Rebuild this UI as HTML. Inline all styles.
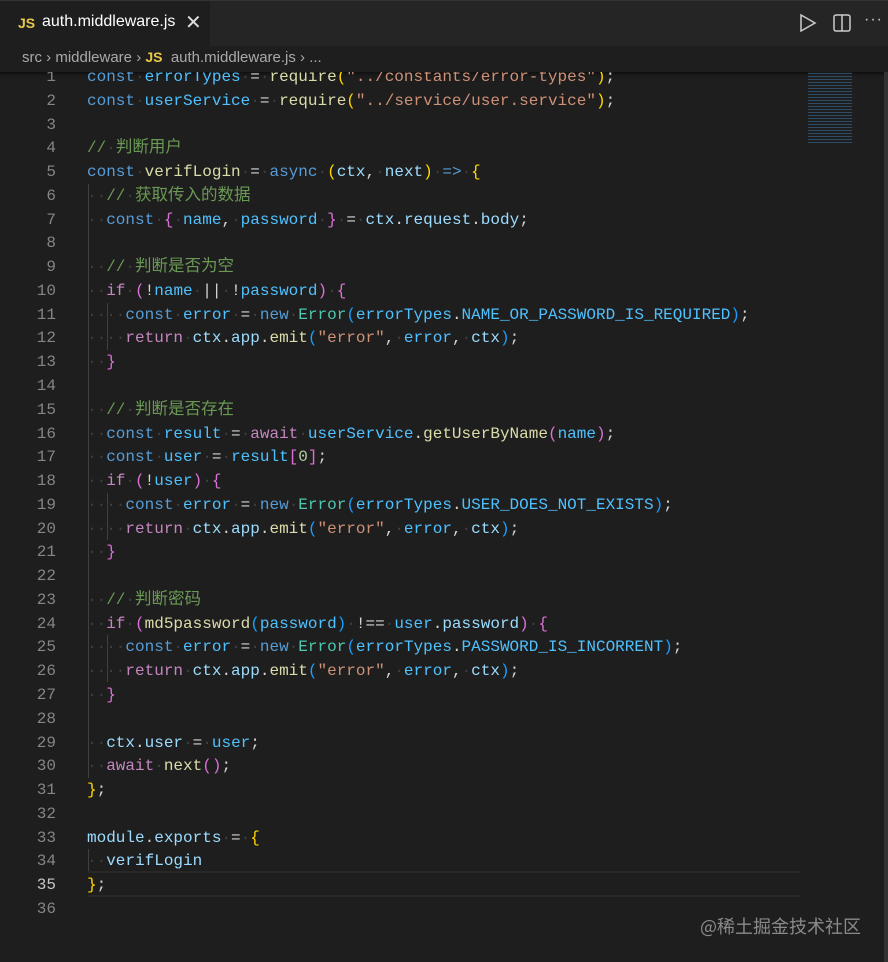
<!DOCTYPE html>
<html><head><meta charset="utf-8"><style>
body{margin:0;width:888px;height:962px;background:#1e1e1e;overflow:hidden;position:relative;font-family:"Liberation Sans",sans-serif}
.tabbar{position:absolute;left:0;top:0;width:888px;height:45px;background:#252526;border-top:1px solid #333}
.tab{position:absolute;left:0;top:0;width:210px;height:45px;background:#1e1e1e}
.js{color:#e8c84a;font-weight:bold;font-size:14px}
.crumb{position:absolute;left:22px;top:49px;font-size:15px;color:#a9a9a9}
.code{position:absolute;left:0;top:72px;width:888px;height:890px;overflow:hidden;box-shadow:inset 0 6px 6px -6px #000}
.ln{position:absolute;left:0;width:56px;text-align:right;color:#858585;font:16px/24px "Liberation Mono",monospace;height:24px}
.l{position:absolute;left:87px;white-space:pre;font:16px/24px "Liberation Mono",monospace;height:24px;color:#d4d4d4;letter-spacing:0}
.cj{font-family:"Noto Sans CJK SC",sans-serif;font-size:16.5px;line-height:1}
.k{color:#569cd6}.v{color:#9cdcfe}.c{color:#4fc1ff}.f{color:#dcdcaa}.s{color:#ce9178}.m{color:#6a9955}.p{color:#c586c0}.t{color:#4ec9b0}.y{color:#ffd700}.o{color:#da70d6}.b{color:#179fff}.n{color:#b5cea8}.d{color:#3f3f3f}
.g{position:absolute;width:1px;background:#404040}
</style></head><body>
<div class="tabbar">
<div class="tab"><span class="js" style="position:absolute;left:18px;top:14px">JS</span><span style="position:absolute;left:42px;top:12px;color:#fff;font-size:16px">auth.middleware.js</span><span style="position:absolute;left:185px;top:9px;color:#ddd;font-size:20px">✕</span></div>
<svg style="position:absolute;left:798px;top:12px" width="20" height="20" viewBox="0 0 20 20"><path d="M3 2 L17 10 L3 18 Z" fill="none" stroke="#ccc" stroke-width="1.5"/></svg>
<svg style="position:absolute;left:832px;top:12px" width="20" height="20" viewBox="0 0 20 20"><rect x="2" y="2" width="16" height="16" rx="2" fill="none" stroke="#ccc" stroke-width="1.5"/><line x1="10" y1="2" x2="10" y2="18" stroke="#ccc" stroke-width="1.5"/></svg>
<span style="position:absolute;left:864px;top:10px;color:#ccc;font-size:16px;letter-spacing:1px">···</span>
</div>
<div class="crumb">src › middleware › <span class="js">JS</span>&nbsp; auth.middleware.js › ...</div>
<div class="code">
<div class="g" style="left:88px;top:112px;height:594px"></div>
<div class="g" style="left:107px;top:231px;height:47px"></div>
<div class="g" style="left:107px;top:421px;height:47px"></div>
<div class="g" style="left:107px;top:563px;height:47px"></div>
<div class="g" style="left:88px;top:777px;height:24px"></div>
<div style="position:absolute;left:87px;top:799px;width:713px;height:22px;border-top:2px solid #282828;border-bottom:2px solid #282828"></div>
<div style="position:absolute;left:808px;top:0;width:44px;height:72px;opacity:.6;background:repeating-linear-gradient(#1e1e1e 0 1px,#3a6a9a 1px 2px,#1e1e1e 2px 3px)"></div>
<div style="position:absolute;left:884px;top:0;width:4px;height:890px;background:#333"></div>
<div id="c"></div>
</div>
<div style="position:absolute;left:700px;top:913px;color:#8a8a8a;font:18px 'Noto Sans CJK SC',sans-serif">@稀土掘金技术社区</div>
<script>
var L=[
'<span class="k">const</span><span class="d">·</span><span class="c">errorTypes</span><span class="d">·</span>=<span class="d">·</span><span class="f">require</span><span class="y">(</span><span class="s">"../constants/error-types"</span><span class="y">)</span>;',
'<span class="k">const</span><span class="d">·</span><span class="c">userService</span><span class="d">·</span>=<span class="d">·</span><span class="f">require</span><span class="y">(</span><span class="s">"../service/user.service"</span><span class="y">)</span>;',
'',
'<span class="m">//<span class="d">·</span><span class="cj">判断用户</span></span>',
'<span class="k">const</span><span class="d">·</span><span class="f">verifLogin</span><span class="d">·</span>=<span class="d">·</span><span class="k">async</span><span class="d">·</span><span class="y">(</span><span class="v">ctx</span>,<span class="d">·</span><span class="v">next</span><span class="y">)</span><span class="d">·</span><span class="k">=&gt;</span><span class="d">·</span><span class="y">{</span>',
'<span class="d">··</span><span class="m">//<span class="d">·</span><span class="cj">获取传入的数据</span></span>',
'<span class="d">··</span><span class="k">const</span><span class="d">·</span><span class="o">{</span><span class="d">·</span><span class="c">name</span>,<span class="d">·</span><span class="c">password</span><span class="d">·</span><span class="o">}</span><span class="d">·</span>=<span class="d">·</span><span class="v">ctx</span>.<span class="v">request</span>.<span class="v">body</span>;',
'',
'<span class="d">··</span><span class="m">//<span class="d">·</span><span class="cj">判断是否为空</span></span>',
'<span class="d">··</span><span class="p">if</span><span class="d">·</span><span class="o">(</span>!<span class="c">name</span><span class="d">·</span>||<span class="d">·</span>!<span class="c">password</span><span class="o">)</span><span class="d">·</span><span class="o">{</span>',
'<span class="d">····</span><span class="k">const</span><span class="d">·</span><span class="c">error</span><span class="d">·</span>=<span class="d">·</span><span class="k">new</span><span class="d">·</span><span class="t">Error</span><span class="b">(</span><span class="c">errorTypes</span>.<span class="c">NAME_OR_PASSWORD_IS_REQUIRED</span><span class="b">)</span>;',
'<span class="d">····</span><span class="p">return</span><span class="d">·</span><span class="v">ctx</span>.<span class="v">app</span>.<span class="f">emit</span><span class="b">(</span><span class="s">"error"</span>,<span class="d">·</span><span class="c">error</span>,<span class="d">·</span><span class="v">ctx</span><span class="b">)</span>;',
'<span class="d">··</span><span class="o">}</span>',
'',
'<span class="d">··</span><span class="m">//<span class="d">·</span><span class="cj">判断是否存在</span></span>',
'<span class="d">··</span><span class="k">const</span><span class="d">·</span><span class="c">result</span><span class="d">·</span>=<span class="d">·</span><span class="p">await</span><span class="d">·</span><span class="c">userService</span>.<span class="f">getUserByName</span><span class="o">(</span><span class="c">name</span><span class="o">)</span>;',
'<span class="d">··</span><span class="k">const</span><span class="d">·</span><span class="c">user</span><span class="d">·</span>=<span class="d">·</span><span class="c">result</span><span class="o">[</span><span class="n">0</span><span class="o">]</span>;',
'<span class="d">··</span><span class="p">if</span><span class="d">·</span><span class="o">(</span>!<span class="c">user</span><span class="o">)</span><span class="d">·</span><span class="o">{</span>',
'<span class="d">····</span><span class="k">const</span><span class="d">·</span><span class="c">error</span><span class="d">·</span>=<span class="d">·</span><span class="k">new</span><span class="d">·</span><span class="t">Error</span><span class="b">(</span><span class="c">errorTypes</span>.<span class="c">USER_DOES_NOT_EXISTS</span><span class="b">)</span>;',
'<span class="d">····</span><span class="p">return</span><span class="d">·</span><span class="v">ctx</span>.<span class="v">app</span>.<span class="f">emit</span><span class="b">(</span><span class="s">"error"</span>,<span class="d">·</span><span class="c">error</span>,<span class="d">·</span><span class="v">ctx</span><span class="b">)</span>;',
'<span class="d">··</span><span class="o">}</span>',
'',
'<span class="d">··</span><span class="m">//<span class="d">·</span><span class="cj">判断密码</span></span>',
'<span class="d">··</span><span class="p">if</span><span class="d">·</span><span class="o">(</span><span class="f">md5password</span><span class="b">(</span><span class="c">password</span><span class="b">)</span><span class="d">·</span>!==<span class="d">·</span><span class="c">user</span>.<span class="v">password</span><span class="o">)</span><span class="d">·</span><span class="o">{</span>',
'<span class="d">····</span><span class="k">const</span><span class="d">·</span><span class="c">error</span><span class="d">·</span>=<span class="d">·</span><span class="k">new</span><span class="d">·</span><span class="t">Error</span><span class="b">(</span><span class="c">errorTypes</span>.<span class="c">PASSWORD_IS_INCORRENT</span><span class="b">)</span>;',
'<span class="d">····</span><span class="p">return</span><span class="d">·</span><span class="v">ctx</span>.<span class="v">app</span>.<span class="f">emit</span><span class="b">(</span><span class="s">"error"</span>,<span class="d">·</span><span class="c">error</span>,<span class="d">·</span><span class="v">ctx</span><span class="b">)</span>;',
'<span class="d">··</span><span class="o">}</span>',
'',
'<span class="d">··</span><span class="v">ctx</span>.<span class="v">user</span><span class="d">·</span>=<span class="d">·</span><span class="c">user</span>;',
'<span class="d">··</span><span class="p">await</span><span class="d">·</span><span class="f">next</span><span class="o">()</span>;',
'<span class="y">}</span>;',
'',
'<span class="v">module</span>.<span class="v">exports</span><span class="d">·</span>=<span class="d">·</span><span class="y">{</span>',
'<span class="d">··</span><span class="v">verifLogin</span>',
'<span class="y">}</span>;',
''];
var h='';
for(var i=0;i<L.length;i++){var t=-7+i*23.77;
h+='<div class="ln" style="top:'+t+'px;'+(i==34?'color:#c6c6c6':'')+'">'+(i+1)+'</div><div class="l" style="top:'+t+'px">'+L[i]+'</div>';}
document.getElementById('c').innerHTML=h;
</script>
</body></html>
